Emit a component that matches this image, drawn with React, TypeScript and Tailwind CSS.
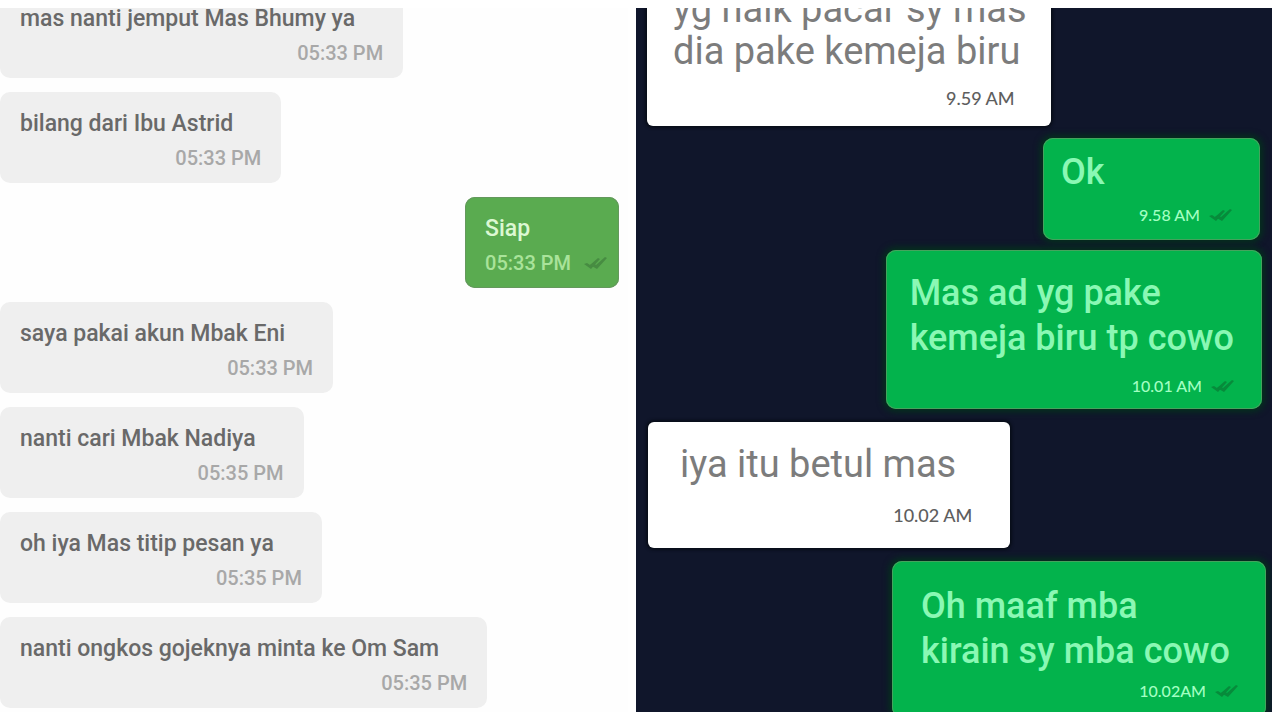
import { clsx } from "clsx";

interface Message {
  lines: string[];
  time: string;
  sent?: boolean;
  box?: string;
  body?: string;
  meta?: string;
}

const customerChat: Message[] = [
  { lines: ["mas nanti jemput Mas Bhumy ya"], time: "05:33 PM" },
  { lines: ["bilang dari Ibu Astrid"], time: "05:33 PM" },
  { lines: ["Siap"], time: "05:33 PM", sent: true },
  { lines: ["saya pakai akun Mbak Eni"], time: "05:33 PM" },
  { lines: ["nanti cari Mbak Nadiya"], time: "05:35 PM" },
  { lines: ["oh iya Mas titip pesan ya"], time: "05:35 PM" },
  { lines: ["nanti ongkos gojeknya minta ke Om Sam"], time: "05:35 PM" },
];

const driverChat: Message[] = [
  {
    lines: ["yg naik pacar sy mas", "dia pake kemeja biru"],
    time: "9.59 AM",
    box: "mb-3 ml-[11px] pt-4 pr-6 pb-[18px] pl-[26px]",
    body: "leading-[42px]",
    meta: "mt-4 mr-3",
  },
  {
    lines: ["Ok"],
    time: "9.58 AM",
    sent: true,
    box: "mb-[10px] mr-3 min-w-[217px] pt-[13px] pr-7 pb-[15px] pl-[18px]",
    body: "leading-[42px]",
    meta: "mt-3",
  },
  {
    lines: ["Mas ad yg pake", "kemeja biru tp cowo"],
    time: "10.01 AM",
    sent: true,
    box: "mb-[13px] mr-[10px] pt-[21px] pr-7 pb-[13px] pl-6",
    body: "leading-[45px]",
    meta: "mt-[15px]",
  },
  {
    lines: ["iya itu betul mas"],
    time: "10.02 AM",
    box: "mb-[13px] ml-3 pt-[21px] pr-[54px] pb-[23px] pl-8",
    body: "leading-[42px]",
    meta: "mt-5 -mr-4",
  },
  {
    lines: ["Oh maaf mba", "kirain sy mba cowo"],
    time: "10.02AM",
    sent: true,
    box: "-mb-[5px] mr-[6px] pt-[23px] pr-9 pb-4 pl-[29px]",
    body: "leading-[45px]",
    meta: "mt-[7px] -mr-2",
  },
];

function ReadTicks({ className }: { className: string }) {
  return (
    <svg viewBox="0 0 24 16" className={clsx("h-4 w-6 shrink-0", className)} fill="currentColor" aria-label="Read">
      <path d="M1 9 L4 8 L7 10 L15 3 L17 4 L8 14 Z" />
      <path d="M7 10 L10 8 L13 10 L22 2 L24 3 L14 14 Z" />
    </svg>
  );
}

function LightBubble({ message }: { message: Message }) {
  const { lines, time, sent } = message;
  return (
    <li
      className={clsx(
        "w-fit shrink-0 rounded-[10px] pt-[18px] pb-[15px] pl-5 font-medium",
        sent ? "mr-[9px] self-end bg-[#5aab50] pr-3 ring-1 ring-[#64985d] ring-inset" : "bg-[#efefef] pr-5"
      )}
    >
      <p className={clsx("text-[23px] leading-7", sent ? "text-[#dcf8d2]" : "mr-7 text-[#696969]")}>{lines[0]}</p>
      <div className="mt-[10px] flex items-center justify-end gap-3">
        <time className={clsx("text-xl leading-5", sent ? "text-[#a9e39a]" : "text-[#a8a8a8]")}>{time}</time>
        {sent && <ReadTicks className="text-[#478c42]" />}
      </div>
    </li>
  );
}

function DarkBubble({ message }: { message: Message }) {
  const { lines, time, sent, box, body, meta } = message;
  return (
    <li
      className={clsx(
        "w-fit shrink-0",
        box,
        sent
          ? "self-end rounded-[10px] bg-[#03b34c] shadow-[0_0_6px_3px_#04301d] ring-1 ring-[#45a35d] ring-inset"
          : "rounded-md bg-white shadow-[0_0_3px_2px_#080d18]"
      )}
    >
      {lines.map((line) => (
        <p key={line} className={clsx(body, sent ? "text-[36px] font-medium text-[#8af8b4]" : "text-[38px] text-[#7c7c7c]")}>
          {line}
        </p>
      ))}
      <div className={clsx("flex items-center justify-end gap-2 font-['Lato',sans-serif] font-medium", meta)}>
        <time className={clsx("leading-5", sent ? "text-base text-[#a2ffc2]" : "text-lg text-[#5e5e5e]")}>{time}</time>
        {sent && <ReadTicks className="text-[#078b3b]" />}
      </div>
    </li>
  );
}

export default function App() {
  return (
    <main className="grid h-screen grid-cols-2 bg-white py-2 font-['Roboto',sans-serif]">
      <section className="mr-3 overflow-hidden bg-[#fefefe]" aria-label="Customer chat">
        <ul className="flex h-full flex-col justify-end gap-[14px] pb-1">
          {customerChat.map((message) => (
            <LightBubble key={message.lines[0]} message={message} />
          ))}
        </ul>
      </section>
      <section className="mr-2 -ml-1 overflow-hidden bg-[#10162b]" aria-label="Driver chat">
        <ul className="flex h-full flex-col justify-end">
          {driverChat.map((message) => (
            <DarkBubble key={message.lines[0]} message={message} />
          ))}
        </ul>
      </section>
    </main>
  );
}
